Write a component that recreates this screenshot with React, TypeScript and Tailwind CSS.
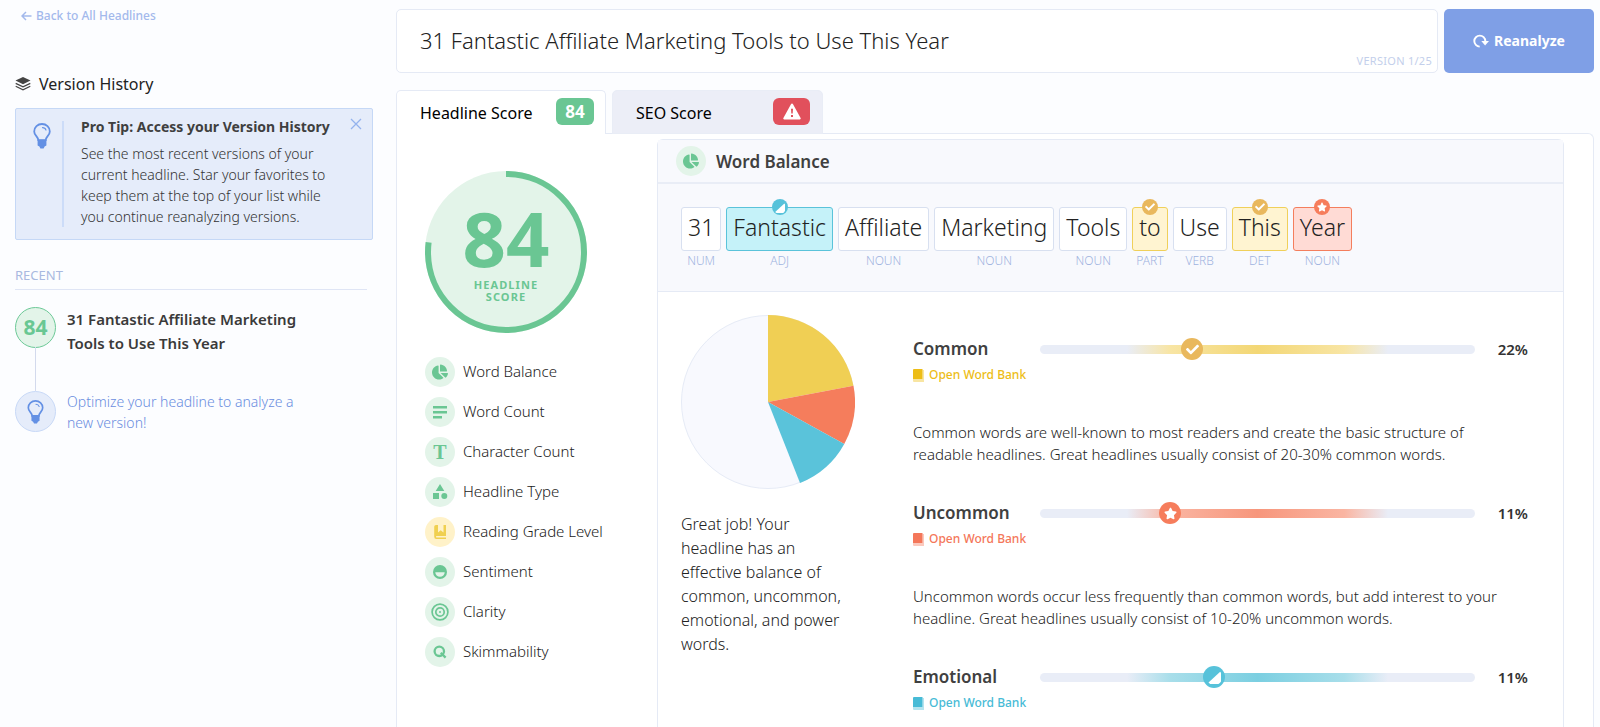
import type { ReactNode } from "react";
import { FaChartPie, FaCheck, FaStar } from "react-icons/fa";

type Kind = "common" | "uncommon" | "emotional";

const words: { text: string; tag: string; kind?: Kind }[] = [
    { text: "31", tag: "NUM" },
    { text: "Fantastic", tag: "ADJ", kind: "emotional" },
    { text: "Affiliate", tag: "NOUN" },
    { text: "Marketing", tag: "NOUN" },
    { text: "Tools", tag: "NOUN" },
    { text: "to", tag: "PART", kind: "common" },
    { text: "Use", tag: "VERB" },
    { text: "This", tag: "DET", kind: "common" },
    { text: "Year", tag: "NOUN", kind: "uncommon" },
];

const wordBox = {
    common: "border-[#f0d05a] bg-[#fff4d1]",
    uncommon: "border-[#f47e5d] bg-[#ffdbd5]",
    emotional: "border-[#5ac3da] bg-[#c5f2f9]",
};

const badgeColor = {
    common: "bg-[#e9b85d]",
    uncommon: "bg-[#f67d5c]",
    emotional: "bg-[#57c2da]",
};

const linkColor = {
    common: "text-[#edbd16]",
    uncommon: "text-[#f4775a]",
    emotional: "text-[#47bbd6]",
};

const barFill = {
    common: "bg-[linear-gradient(90deg,#e9edf7_20%,#f8e5a4_30%,#f3d775_50%,#f8e5a4_70%,#e9edf7_80%)]",
    uncommon: "bg-[linear-gradient(90deg,#e9edf7_20%,#fab5a2_30%,#f7967c_50%,#fab5a2_70%,#e9edf7_80%)]",
    emotional: "bg-[linear-gradient(90deg,#e9edf7_20%,#a8deea_30%,#7bcfe1_50%,#a8deea_70%,#e9edf7_80%)]",
};

const balance: { name: string; kind: Kind; percent: number; position: number; text?: string }[] = [
    {
        name: "Common",
        kind: "common",
        percent: 22,
        position: 35,
        text: "Common words are well-known to most readers and create the basic structure of readable headlines. Great headlines usually consist of 20-30% common words.",
    },
    {
        name: "Uncommon",
        kind: "uncommon",
        percent: 11,
        position: 30,
        text: "Uncommon words occur less frequently than common words, but add interest to your headline. Great headlines usually consist of 10-20% uncommon words.",
    },
    { name: "Emotional", kind: "emotional", percent: 11, position: 40 },
];

const metrics: { label: string; icon: ReactNode; warn?: boolean }[] = [
    { label: "Word Balance", icon: <FaChartPie className="size-4" /> },
    {
        label: "Word Count",
        icon: (
            <svg viewBox="0 0 14 14" className="size-[14px]" fill="currentColor">
                <path d="M0 1h14v2.4H0zM0 6h14v2.4H0zM0 11h9v2.4H0z" />
            </svg>
        ),
    },
    { label: "Character Count", icon: <span className="font-['Liberation_Serif',serif] text-xl font-bold">T</span> },
    {
        label: "Headline Type",
        icon: (
            <svg viewBox="0 0 16 16" className="size-4" fill="currentColor">
                <path d="M8 0l4.3 7H3.700zM1 9h6v6H1z" />
                <circle cx="12.300" cy="12" r="3" />
            </svg>
        ),
    },
    {
        label: "Reading Grade Level",
        warn: true,
        icon: (
            <svg viewBox="0 0 14 15" className="size-[15px]" fill="currentColor">
                <path d="M2.500 0h2v7.500L7.200 5.200 10 7.500V0h2.500v11H3.200a.8.8 0 000 1.600h9.300V14H3a2.200 2.200 0 01-2.300-2.200V1.800A1.800 1.800 0 012.500 0z" />
            </svg>
        ),
    },
    {
        label: "Sentiment",
        icon: (
            <svg viewBox="0 0 14 14" className="size-[14px]">
                <circle cx="7" cy="7" r="7" fill="currentColor" />
                <path d="M2.300 7.200h9.400a4.700 4.500 0 01-9.400 0z" fill="#e3f4e9" />
            </svg>
        ),
    },
    {
        label: "Clarity",
        icon: (
            <svg viewBox="0 0 18 18" className="size-[18px]" fill="none" stroke="currentColor" strokeWidth="1.700">
                <circle cx="9" cy="9" r="7.900" />
                <circle cx="9" cy="9" r="4.200" />
                <circle cx="9" cy="9" r="1" fill="currentColor" stroke="none" />
            </svg>
        ),
    },
    {
        label: "Skimmability",
        icon: (
            <svg viewBox="0 0 14 14" className="size-[14px]" fill="none" stroke="currentColor" strokeWidth="2.300">
                <circle cx="6.300" cy="6.300" r="4.700" />
                <path d="M7.800 7.800l4.800 4.800" />
            </svg>
        ),
    },
];

function Bulb({ className }: { className: string }) {
    return (
        <svg viewBox="0 0 18 26" className={className} fill="none" stroke="currentColor">
            <path
                d="M5.300 17.200C5.300 13.500 1.200 12.600 1.200 8.400a7.800 7.400 0 0115.600 0c0 4.200-4.100 5.100-4.100 8.800z"
                strokeWidth="1.800"
            />
            <path d="M9.500 4.600c1.800 0 3 .9 3.500 2.500" strokeWidth="1.100" strokeLinecap="round" />
            <path d="M4.600 16.800h8.800v5.700l-1.800 1-1 1.900H7.400l-1-1.900-1.800-1z" fill="currentColor" stroke="none" />
        </svg>
    );
}

function KindBadge({ kind, size }: { kind: Kind; size: "small" | "large" }) {
    return (
        <span className={`flex items-center justify-center rounded-full text-white ${badgeColor[kind]} ${size === "small" ? "size-4" : "size-[22px]"}`}>
            {kind === "common" && <FaCheck className={size === "small" ? "size-[10px]" : "size-[13px]"} />}
            {kind === "uncommon" && <FaStar className={size === "small" ? "size-[10px]" : "size-[13px]"} />}
            {kind === "emotional" && (
                <svg viewBox="0 0 12 12" className={size === "small" ? "size-[11px]" : "size-[14px]"} fill="currentColor">
                    <path d="M11.300 1.500A6 6 0 011.300 10.800z" />
                </svg>
            )}
        </span>
    );
}

function Sidebar() {
    return (
        <aside className="w-[396px] shrink-0 pl-[15px] pr-[23px]">
            <a href="#" className="mt-[6px] ml-[6px] flex items-center gap-1 text-xs leading-5 font-medium text-[#a3b9ec]">
                <svg viewBox="0 0 11 10" className="h-[10px] w-[11px]" fill="none" stroke="currentColor" strokeWidth="1.500">
                    <path d="M10.500 5H1M5 1L1 5l4 4" />
                </svg>
                Back to All Headlines
            </a>
            <h2 className="mt-[46px] flex items-center gap-2 text-base leading-6 text-[#222]">
                <svg viewBox="0 0 16 16" className="size-4 text-[#444]">
                    <path d="M8 1l7.500 3.600L8 8.200.5 4.600z" fill="currentColor" />
                    <path d="M.7 7.400L8 10.900l7.300-3.500M.7 10.300L8 13.800l7.300-3.500" fill="none" stroke="currentColor" strokeWidth="1.200" />
                </svg>
                Version History
            </h2>

            <div className="relative mt-3 flex rounded-[2px] border border-[#c5d8f6] bg-[#e5ecfa] py-3 pl-[17px]">
                <Bulb className="mt-[2px] h-[26px] w-[18px] shrink-0 text-[#6390e4]" />
                <div className="ml-[11px] border-l-2 border-[#ccdcf8] pl-[17px]">
                    <h3 className="-mt-[6px] mb-1 text-sm leading-6 font-bold text-[#3f3f3f]">Pro Tip: Access your Version History</h3>
                    <p className="pr-[42px] text-sm leading-[21px] font-light text-[#333]">
                        See the most recent versions of your current headline. Star your favorites to keep them at the top of your list while you continue reanalyzing versions.
                    </p>
                </div>
                <button aria-label="Close" className="absolute top-[9px] right-[10px] text-[#94b3ee]">
                    <svg viewBox="0 0 12 12" className="size-3" fill="none" stroke="currentColor" strokeWidth="1.300">
                        <path d="M1 1l10 10M11 1L1 11" />
                    </svg>
                </button>
            </div>

            <h4 className="mt-[25px] mr-[6px] border-b border-[#dfe5f5] pb-1 text-[13px] leading-5 text-[#a9b9e0]">RECENT</h4>
            <ul className="mt-[17px]">
                <li className="relative flex h-[84px] gap-[11px]">
                    <span className="absolute top-10 left-5 h-11 w-px bg-[#d3daed]" />
                    <span className="flex size-[41px] shrink-0 items-center justify-center rounded-full border border-[#6cc997] bg-[#e3f4e9] text-[21px] font-bold text-[#69c793]">84</span>
                    <p className="pr-14 text-[15px] leading-6 font-semibold text-[#3a3a3a]">31 Fantastic Affiliate Marketing Tools to Use This Year</p>
                </li>
                <li className="flex gap-[11px]">
                    <span className="flex size-[41px] shrink-0 items-center justify-center rounded-full border border-[#c8d9f7] bg-[#e5ecfa] text-[#6390e4]">
                        <Bulb className="h-6 w-[17px]" />
                    </span>
                    <p className="pr-16 text-sm leading-[21px] font-light text-[#6a8de0]">Optimize your headline to analyze a new version!</p>
                </li>
            </ul>
        </aside>
    );
}

function ScoreColumn() {
    return (
        <div className="w-[260px] shrink-0 pt-[37px] pl-7">
            <div className="relative flex size-[162px] flex-col items-center justify-center pb-1">
                <svg viewBox="0 0 162 162" className="absolute inset-0 size-full">
                    <circle cx="81" cy="81" r="81" fill="#e3f4e9" />
                    <circle
                        cx="81"
                        cy="81"
                        r="78"
                        fill="none"
                        stroke="#6ac693"
                        strokeWidth="6"
                        pathLength="100"
                        strokeDasharray="77 100"
                        transform="rotate(-90 81 81)"
                    />
                </svg>
                <span className="relative text-[76px] leading-[82px] font-bold text-[#6ac693]">84</span>
                <span className="relative text-center text-[11px] leading-3 font-bold tracking-widest text-[#6ac693]">
                    HEADLINE
                    <br />
                    SCORE
                </span>
            </div>
            <ul className="mt-6 flex flex-col gap-[10px]">
                {metrics.map((m) => (
                    <li key={m.label} className="flex items-center gap-2">
                        <span className={`flex size-[30px] items-center justify-center rounded-full ${m.warn ? "bg-[#fff2c9] text-[#f0d050]" : "bg-[#e3f4e9] text-[#6ac693]"}`}>{m.icon}</span>
                        <span className="pb-[3px] text-[15px] leading-6 font-light text-[#222]">{m.label}</span>
                    </li>
                ))}
            </ul>
        </div>
    );
}

function WordBalance() {
    return (
        <section className="mt-[5px] mr-[29px] flex-1 rounded-t-md border border-b-0 border-[#e5eaf5]">
            <div className="flex h-[44px] items-center gap-[10px] border-b-2 border-[#e9edf6] bg-[#f8f9fd] pl-[18px]">
                <span className="flex size-[30px] items-center justify-center rounded-full bg-[#e3f4e9] text-[#6ac693]">
                    <FaChartPie className="size-4" />
                </span>
                <h2 className="pt-[2px] text-[17px] font-semibold text-[#404040]">Word Balance</h2>
            </div>
            <ul className="flex gap-[5px] border-b border-[#e5eaf5] bg-[#f8f9fd] pt-[23px] pb-[22px] pl-[23px]">
                {words.map((w) => (
                    <li key={w.text} className="relative flex flex-col items-center">
                        <span className={`flex h-11 items-center rounded-[3px] border px-[6px] pb-[3px] text-[23px] font-light text-[#222] ${w.kind ? wordBox[w.kind] : "border-[#d8e0f0] bg-white"}`}>
                            {w.text}
                        </span>
                        {w.kind && (
                            <span className="absolute -top-2">
                                <KindBadge kind={w.kind} size="small" />
                            </span>
                        )}
                        <span className="pt-[2px] text-xs leading-4 font-light text-[#9fb3e0]">{w.tag}</span>
                    </li>
                ))}
            </ul>
            <div className="flex gap-[58px] pt-[23px] pr-[35px] pl-[23px]">
                <div className="w-[174px] shrink-0">
                    <svg viewBox="-87 -87 174 174" className="size-[174px]" role="img" aria-label="Word balance chart">
                        <circle r="86.500" fill="#f8f9fe" stroke="#e6ebf6" />
                        <path d="M0 0V-87A87 87 0 0185.460-16.300z" fill="#f0cf54" />
                        <path d="M0 0L85.460-16.300A87 87 0 0176.240 41.910z" fill="#f57d5c" />
                        <path d="M0 0L76.240 41.910A87 87 0 0132.030 80.890z" fill="#5ac3da" />
                    </svg>
                    <p className="mt-[23px] text-base leading-6 font-light text-[#222]">
                        Great job! Your headline has an effective balance of common, uncommon, emotional, and power words.
                    </p>
                </div>
                <div className="flex min-w-0 flex-1 flex-col gap-9 pt-[22px]">
                    {balance.map((b) => (
                        <div key={b.name}>
                            <div className="flex items-center">
                                <h3 className="w-[127px] shrink-0 text-[17px] leading-6 font-semibold text-[#404040]">{b.name}</h3>
                                <div
                                    role="meter"
                                    aria-label={b.name}
                                    aria-valuenow={b.percent}
                                    className={`relative h-[9px] flex-1 rounded-full ${barFill[b.kind]}`}
                                >
                                    <span className="absolute top-1/2 -translate-1/2" style={{ left: `${b.position}%` }}>
                                        <KindBadge kind={b.kind} size="large" />
                                    </span>
                                </div>
                                <span className="ml-[23px] text-[15px] font-semibold text-[#333]">{b.percent}%</span>
                            </div>
                            <a href="#" className={`mt-1 flex items-center gap-[5px] text-xs leading-5 font-medium ${linkColor[b.kind]}`}>
                                <svg viewBox="0 0 11 13" className="h-[13px] w-[11px]" fill="currentColor">
                                    <path d="M1 0h8.500v10H0V1a1 1 0 011-1z" />
                                    <path d="M9.500 1H11v12H1a1 1 0 01-1-1v-2h9.500z" opacity=".4" />
                                </svg>
                                Open Word Bank
                            </a>
                            {b.text && <p className="mt-9 pr-5 text-[15px] leading-[22px] font-light text-[#222]">{b.text}</p>}
                        </div>
                    ))}
                </div>
            </div>
        </section>
    );
}

export default function App() {
    return (
        <div className="flex h-screen overflow-hidden bg-[#fcfdff] font-['Noto_Sans',sans-serif]">
            <Sidebar />
            <main className="flex min-w-0 flex-1 flex-col pt-[9px] pr-[6px]">
                <div className="flex h-16 shrink-0 gap-[6px]">
                    <div className="relative flex-1">
                        <input
                            aria-label="Headline"
                            defaultValue="31 Fantastic Affiliate Marketing Tools to Use This Year"
                            className="size-full rounded-[5px] border border-[#e5eaf5] bg-white pb-[3px] pl-[23px] text-[22px] font-light text-[#222] outline-none"
                        />
                        <span className="absolute right-[6px] bottom-1 text-[11px] leading-4 tracking-wide text-[#c3cfeb]">VERSION 1/25</span>
                    </div>
                    <button className="flex w-[150px] items-center justify-center gap-[5px] rounded-[5px] bg-[#7f9fe6] text-sm font-bold text-white">
                        <svg viewBox="0 0 16 14" className="h-[14px] w-4">
                            <path d="M6.700 12.600A5.500 5.500 0 1112.300 7" fill="none" stroke="currentColor" strokeWidth="1.900" />
                            <path d="M8.300 7H16l-3.900 4.500z" fill="currentColor" />
                        </svg>
                        Reanalyze
                    </button>
                </div>

                <div className="relative mt-[17px] -mb-px flex shrink-0 gap-[6px]" role="tablist">
                    <button role="tab" aria-selected="true" className="flex h-[44px] w-[210px] items-center justify-between rounded-t-[5px] border border-b-0 border-[#e5eaf5] bg-white pr-[11px] pb-[2px] pl-[23px] text-base text-black">
                        <span className="pt-[2px]">Headline Score</span>
                        <span className="w-[38px] rounded-md bg-[#6ac693] text-[17px] leading-[27px] font-bold text-white">84</span>
                    </button>
                    <button role="tab" aria-selected="false" className="flex h-[44px] w-[211px] items-center justify-between rounded-t-[5px] border border-[#e9edf6] bg-[#eceef7] pr-[12px] pb-px pl-[23px] text-base text-black">
                        <span className="pt-[2px]">SEO Score</span>
                        <span className="flex h-[27px] w-[37px] items-center justify-center rounded-md bg-[#e1505c]">
                            <svg viewBox="0 0 18 17" className="h-[17px] w-[18px]">
                                <path d="M9 .5a1 1 0 01.9.5l7.700 14a1 1 0 01-.9 1.500H1.300a1 1 0 01-.9-1.500L8.100 1A1 1 0 019 .5z" fill="#fff" />
                                <path d="M8 5.800h2l-.3 4.700H8.300zM8 12h2v2H8z" fill="#e1505c" />
                            </svg>
                        </span>
                    </button>
                </div>
                <div className="flex flex-1 rounded-tr-md border border-b-0 border-[#e5eaf5] bg-white">
                    <ScoreColumn />
                    <WordBalance />
                </div>
            </main>
        </div>
    );
}
